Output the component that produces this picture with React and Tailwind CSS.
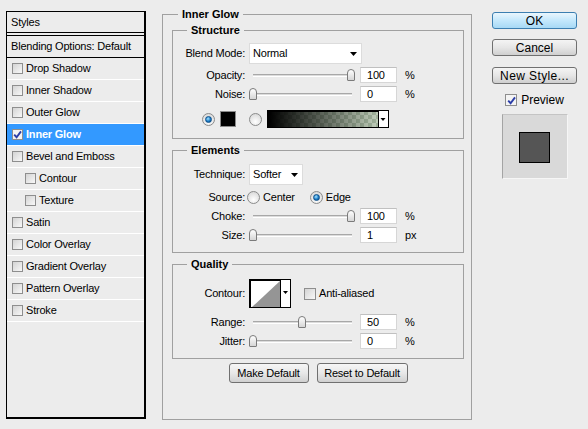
import React from "react";

const Check = () => (
  <svg width="9" height="9" viewBox="0 0 9 9" className="block">
    <path d="M1.2 4.6 L3.6 7.2 L8 1.4" fill="none" stroke="#2c3ea8" strokeWidth="1.9" />
  </svg>
);

function Checkbox({ checked, big }) {
  return (
    <span
      className={`${big ? "w-[12px] h-[12px]" : "w-[11px] h-[11px]"} shrink-0 border border-[#8e8e8e] flex items-center justify-center ${
        checked ? "bg-[#f4f4f4]" : "bg-linear-to-br from-[#d4d4d4] to-[#f8f8f8]"
      }`}
    >
      {checked && <Check />}
    </span>
  );
}

function Radio({ checked, className = "" }) {
  return (
    <span
      className={`w-[13px] h-[13px] shrink-0 rounded-full border border-[#8a8b8b] bg-[radial-gradient(circle_at_50%_70%,#ffffff,#d2d2d2)] flex items-center justify-center ${className}`}
    >
      {checked && (
        <span className="w-[7px] h-[7px] rounded-full bg-[radial-gradient(circle_at_40%_35%,#a6e4ff,#1a7cc8_55%,#0b3d70)] border border-[#0d4f8a]" />
      )}
    </span>
  );
}

function Label({ children }) {
  return <div className="w-[72px] shrink-0 text-right">{children}</div>;
}

function Slider({ pos }) {
  return (
    <div className="relative ml-[4px] w-[106px] h-[16px] shrink-0">
      <div className="absolute left-[4px] right-[3px] top-[7px] h-[3px] border-t border-[#a8a8a8] bg-[#dcdcdc] border-b border-b-white" />
      <div
        className="absolute top-[2px] w-[8px] h-[12px] rounded-t-[4px] rounded-b-[1px] border border-[#7b7b7b] bg-linear-to-b from-white to-[#d6d6d6]"
        style={{ left: `${Math.round(pos * 0.98)}px` }}
      />
    </div>
  );
}

function Field({ value }) {
  return (
    <div className="ml-[5px] w-[37px] h-[16px] shrink-0 bg-white border border-[#d6d6d6] border-t-[#c0c0c0] pl-[6px] leading-[14px]">
      {value}
    </div>
  );
}

function SliderRow({ label, value, pos, unit, className }) {
  return (
    <div className={`flex items-center h-[16px] ${className}`}>
      <Label>{label}</Label>
      <Slider pos={pos ?? value} />
      <Field value={value} />
      <span className="ml-[8px]">{unit}</span>
    </div>
  );
}

const Tri = () => (
  <svg width="7" height="4" viewBox="0 0 7 4" className="block">
    <polygon points="0,0 7,0 3.5,4" fill="#000" />
  </svg>
);

function GradientSwatch() {
  return (
    <svg width="122" height="18" viewBox="0 0 122 18" className="block ml-[5px] shrink-0">
      <defs>
        <pattern id="chk" width="8" height="8" patternUnits="userSpaceOnUse" x="1" y="1">
          <rect width="8" height="8" fill="#bfcdb9" />
          <rect width="4" height="4" fill="#a0b29b" />
          <rect x="4" y="4" width="4" height="4" fill="#a0b29b" />
        </pattern>
        <linearGradient id="fade" x1="0" x2="1" y1="0" y2="0">
          <stop offset="0" stopColor="#000" stopOpacity="1" />
          <stop offset="1" stopColor="#000" stopOpacity="0" />
        </linearGradient>
      </defs>
      <rect x="0" y="0" width="122" height="18" fill="#000" />
      <rect x="2" y="2" width="109" height="15" fill="url(#chk)" />
      <rect x="2" y="2" width="109" height="15" fill="url(#fade)" />
      <rect x="112" y="1" width="9" height="16" fill="#fff" />
      <polygon points="113.5,8 118.5,8 116,11" fill="#000" />
    </svg>
  );
}

function ContourSwatch() {
  return (
    <svg width="42" height="29" viewBox="0 0 42 29" className="block ml-[4px] shrink-0">
      <rect x="0" y="0" width="42" height="29" fill="#000" />
      <rect x="2" y="2" width="29" height="26" fill="#fff" />
      <polygon points="3,28 31,28 31,2" fill="#959595" />
      <rect x="32" y="1" width="9" height="27" fill="#fff" />
      <polygon points="34,12 39,12 36.5,15" fill="#000" />
    </svg>
  );
}

function Select({ text, w }) {
  return (
    <div
      className={`ml-[4px] ${w} h-[21px] shrink-0 bg-white border border-[#dcdcdc] flex items-center justify-between pl-[3px] pr-[4px]`}
    >
      <span>{text}</span>
      <Tri />
    </div>
  );
}

const items = [
  { t: "Drop Shadow" },
  { t: "Inner Shadow" },
  { t: "Outer Glow" },
  { t: "Inner Glow", sel: true },
  { t: "Bevel and Emboss" },
  { t: "Contour", sub: true },
  { t: "Texture", sub: true },
  { t: "Satin" },
  { t: "Color Overlay" },
  { t: "Gradient Overlay" },
  { t: "Pattern Overlay" },
  { t: "Stroke" },
];

function GrayButton({ children, w }) {
  return (
    <div
      className={`${w} h-[20px] rounded-[3px] border border-[#707070] bg-linear-to-b from-[#f6f6f6] via-[#e8e8e8] to-[#d0d0d0] flex items-center justify-center`}
    >
      {children}
    </div>
  );
}

export default function App() {
  return (
    <div className="w-[588px] h-[429px] bg-[#ececec] flex items-start text-[11px] text-black tracking-[-0.2px] font-['Liberation_Sans',Arial,sans-serif] overflow-hidden">
      {/* Left styles list */}
      <div className="mt-[11px] ml-[6px] w-[140px] h-[408px] shrink-0 border-l border-t border-black border-r-2 border-b-2 flex flex-col">
        <div className="h-[21px] border-b border-black flex items-center pl-[4px]">Styles</div>
        <div className="h-[2px]" />
        <div className="h-[23px] border-t border-b border-black flex items-center pl-[4px]">
          Blending Options: Default
        </div>
        {items.map((it) => (
          <div
            key={it.t}
            className={`h-[22px] border-b border-white flex items-center gap-[3px] ${it.sub ? "pl-[18px]" : "pl-[5px]"} ${
              it.sel ? "bg-[#3399ff] text-white font-bold" : ""
            }`}
          >
            <Checkbox checked={it.sel} />
            <span>{it.t}</span>
          </div>
        ))}
      </div>

      {/* Main group */}
      <fieldset className="mt-[8px] ml-[16px] w-[310px] h-[412px] shrink-0 border border-[#a0a0a0] pl-[9px] pr-[7px] min-w-0">
        <legend className="ml-[6px] px-[4px] font-bold leading-[12px] tracking-normal">Inner Glow</legend>

        {/* Structure */}
        <fieldset className="mt-[4px] border border-[#a0a0a0] pb-[10px] min-w-0">
          <legend className="ml-[14px] px-[4px] font-bold leading-[12px] tracking-normal">Structure</legend>
          <div className="mt-[7px] h-[21px] flex items-center">
            <Label>Blend Mode:</Label>
            <Select text="Normal" w="w-[113px]" />
          </div>
          <SliderRow label="Opacity:" value={100} unit="%" className="mt-[3px]" />
          <SliderRow label="Noise:" value={0} unit="%" className="mt-[3px]" />
          <div className="mt-[8px] h-[18px] flex items-center pl-[29px]">
            <Radio checked />
            <div className="ml-[5px] w-[16px] h-[16px] shrink-0 bg-black border border-[#8a8a8a]" />
            <Radio className="ml-[13px]" />
            <GradientSwatch />
          </div>
        </fieldset>

        {/* Elements */}
        <fieldset className="mt-[5px] border border-[#a0a0a0] pb-[9px] min-w-0">
          <legend className="ml-[14px] px-[4px] font-bold leading-[12px] tracking-normal">Elements</legend>
          <div className="mt-[8px] h-[21px] flex items-center">
            <Label>Technique:</Label>
            <Select text="Softer" w="w-[54px]" />
          </div>
          <div className="mt-[6px] h-[13px] flex items-center">
            <Label>Source:</Label>
            <Radio className="ml-[2px]" />
            <span className="ml-[3px]">Center</span>
            <Radio checked className="ml-[15px]" />
            <span className="ml-[3px]">Edge</span>
          </div>
          <SliderRow label="Choke:" value={100} unit="%" className="mt-[4px]" />
          <SliderRow label="Size:" value={1} pos={0} unit="px" className="mt-[3px]" />
        </fieldset>

        {/* Quality */}
        <fieldset className="mt-[5px] border border-[#a0a0a0] pb-[9px] min-w-0">
          <legend className="ml-[14px] px-[4px] font-bold leading-[12px] tracking-normal">Quality</legend>
          <div className="mt-[9px] h-[29px] flex items-center">
            <Label>Contour:</Label>
            <ContourSwatch />
            <span className="ml-[13px]">
              <Checkbox big />
            </span>
            <span className="ml-[3px]">Anti-aliased</span>
          </div>
          <SliderRow label="Range:" value={50} unit="%" className="mt-[6px]" />
          <SliderRow label="Jitter:" value={0} unit="%" className="mt-[3px]" />
        </fieldset>

        <div className="mt-[4px] flex justify-center gap-[8px]">
          <GrayButton w="w-[80px]">Make Default</GrayButton>
          <GrayButton w="w-[91px]">Reset to Default</GrayButton>
        </div>
      </fieldset>

      {/* Right column */}
      <div className="mt-[12px] ml-[20px] w-[85px] shrink-0 flex flex-col text-[12px] tracking-normal">
        <div className="h-[17px] rounded-[3px] border border-[#3c7fb1] bg-linear-to-b from-[#eaf6fd] via-[#c4e8fc] to-[#a7d9f5] flex items-center justify-center">
          OK
        </div>
        <div className="mt-[10px] h-[17px] rounded-[3px] border border-[#707070] bg-linear-to-b from-[#f4f4f4] via-[#e6e6e6] to-[#cfcfcf] flex items-center justify-center">
          Cancel
        </div>
        <div className="mt-[11px] h-[17px] rounded-[3px] border border-[#707070] bg-linear-to-b from-[#f4f4f4] via-[#e6e6e6] to-[#cfcfcf] flex items-center justify-center tracking-[0.4px]">
          New Style...
        </div>
        <div className="mt-[10px] h-[12px] flex items-center justify-center gap-[4px]">
          <Checkbox checked big />
          <span>Preview</span>
        </div>
        <div className="mt-[8px] mx-auto w-[66px] h-[65px] bg-[#d9d9d9] border border-t-[#c4c4c4] border-l-[#a4a4a4] border-r-[#f6f6f6] border-b-[#f6f6f6] flex items-center justify-center pt-[2px]">
          <div className="w-[31px] h-[31px] bg-[#555555] border border-black" />
        </div>
      </div>
    </div>
  );
}
